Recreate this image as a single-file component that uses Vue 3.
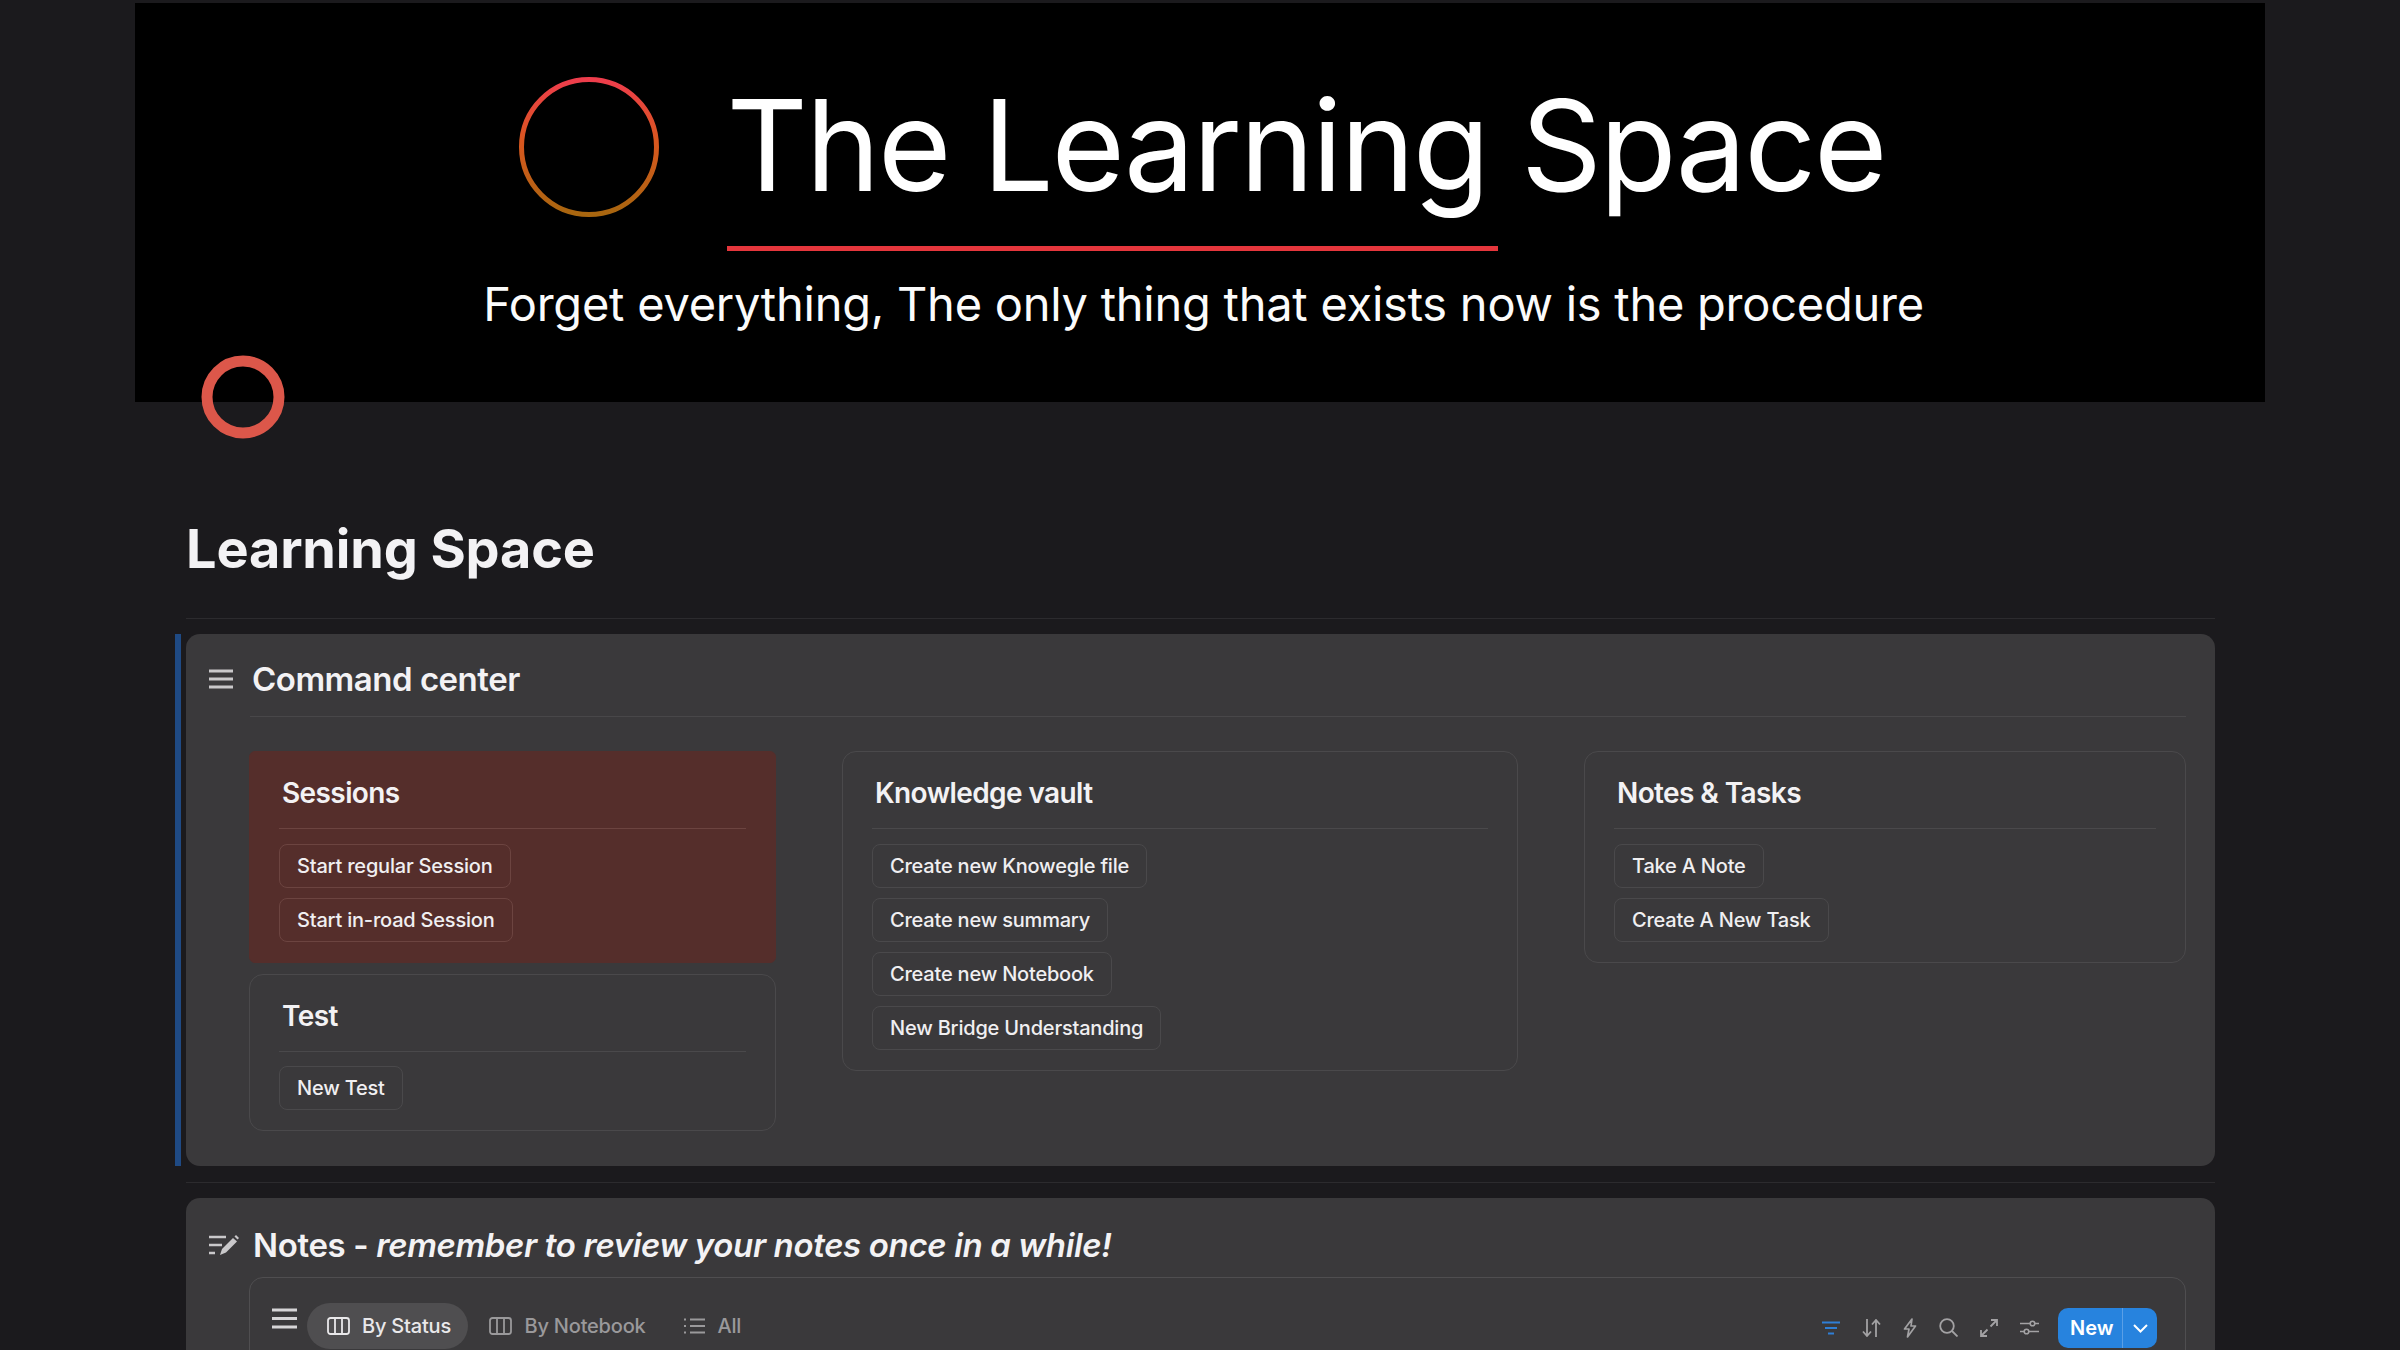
<script setup>
const columns = [
  [
    { title: 'Sessions', tone: 'red', actions: ['Start regular Session', 'Start in-road Session'] },
    { title: 'Test', actions: ['New Test'] }
  ],
  [
    {
      title: 'Knowledge vault',
      actions: ['Create new Knowegle file', 'Create new summary', 'Create new Notebook', 'New Bridge Understanding']
    }
  ],
  [
    { title: 'Notes & Tasks', actions: ['Take A Note', 'Create A New Task'] }
  ]
]

const tabs = [
  { label: 'By Status', icon: 'board', active: true },
  { label: 'By Notebook', icon: 'board' },
  { label: 'All', icon: 'list' }
]
</script>

<template>
  <div class="page">
    <header class="banner">
      <div class="brand">
        <svg class="brand-ring" width="144" height="144" viewBox="0 0 144 144">
          <defs>
            <linearGradient id="ringFade" x1="0" y1="0" x2="0" y2="1">
              <stop offset="0" stop-color="#ee3d4c" />
              <stop offset="0.45" stop-color="#d9561f" />
              <stop offset="1" stop-color="#a8660f" />
            </linearGradient>
          </defs>
          <circle cx="72" cy="72" r="67.5" fill="none" stroke="url(#ringFade)" stroke-width="5" />
        </svg>
        <div>
          <h1 class="brand-title">The Learning Space</h1>
          <div class="brand-line"></div>
        </div>
      </div>
      <p class="brand-sub">Forget everything, The only thing that exists now is the procedure</p>
    </header>

    <svg class="page-icon" width="84" height="84" viewBox="0 0 84 84">
      <circle cx="42" cy="42" r="36" fill="none" stroke="#dc574a" stroke-width="11" />
    </svg>

    <main class="content">
      <h2 class="page-title">Learning Space</h2>
      <div class="rule"></div>

      <div class="quote">
        <section class="callout">
          <div class="callout-head">
            <svg class="head-icon" width="26" height="20" viewBox="0 0 26 20">
              <path d="M1 2h24M1 10h24M1 18h24" stroke="#c9c8ca" stroke-width="3" fill="none" />
            </svg>
            <h3>Command center</h3>
          </div>
          <div class="head-rule"></div>

          <div class="grid">
            <div v-for="(col, i) in columns" :key="i" class="column">
              <div v-for="card in col" :key="card.title" class="card" :class="card.tone">
                <h4>{{ card.title }}</h4>
                <div class="card-rule"></div>
                <button v-for="a in card.actions" :key="a" class="action">{{ a }}</button>
              </div>
            </div>
          </div>
        </section>
      </div>

      <div class="rule second"></div>

      <section class="callout notes">
        <div class="notes-head">
          <svg class="head-icon" width="32" height="22" viewBox="0 0 32 22">
            <path d="M1 3h17M1 11h13M1 19h6" stroke="#c9c8ca" stroke-width="2.6" fill="none" />
            <path d="M12 21l2-6L25 4l4 3.500L18 18.500z" fill="#c9c8ca" />
            <path d="M26.500 2.500l1.500-1.500 3 3-1.500 1.500z" fill="#c9c8ca" />
          </svg>
          <h3>Notes - <em>remember to review your notes once in a while!</em></h3>
        </div>

        <div class="db">
          <div class="db-bar">
            <svg class="db-menu" width="25" height="21" viewBox="0 0 25 21">
              <path d="M0 2h25M0 10.500h25M0 19h25" stroke="#d6d5d7" stroke-width="3" fill="none" />
            </svg>
            <button v-for="t in tabs" :key="t.label" class="tab" :class="{ active: t.active }">
              <svg v-if="t.icon === 'board'" width="23" height="18" viewBox="0 0 23 18" fill="none" stroke="currentColor" stroke-width="1.800">
                <rect x="1" y="1" width="21" height="16" rx="2.500" />
                <path d="M8 1v16M15 1v16" />
              </svg>
              <svg v-else width="23" height="18" viewBox="0 0 23 18" fill="none" stroke="currentColor" stroke-width="1.800">
                <path d="M7 2.500h15M7 9h15M7 15.500h15" />
                <path d="M1 2.500h2M1 9h2M1 15.500h2" />
              </svg>
              <span>{{ t.label }}</span>
            </button>

            <div class="tools">
              <svg width="18" height="14" viewBox="0 0 18 14" fill="none" stroke="#2f7fd6" stroke-width="2.200">
                <path d="M0 1.500h18M3 7h12M6 12.500h6" />
              </svg>
              <svg width="19" height="18" viewBox="0 0 19 18" fill="none" stroke="#a3a2a4" stroke-width="1.800">
                <path d="M5 0v17M1 12.500l4 4.500 4-4.500M14 18V1M10 5.500L14 1l4 4.500" />
              </svg>
              <svg width="14" height="20" viewBox="0 0 14 20" fill="none" stroke="#a3a2a4" stroke-width="1.700" stroke-linejoin="round">
                <path d="M9 1L1.500 11H6l-1.500 8L12.500 8H8z" />
              </svg>
              <svg width="19" height="19" viewBox="0 0 19 19" fill="none" stroke="#a3a2a4" stroke-width="1.800">
                <circle cx="8" cy="8" r="6.800" />
                <path d="M13 13l5.500 5.500" />
              </svg>
              <svg width="18" height="18" viewBox="0 0 18 18" fill="none" stroke="#a3a2a4" stroke-width="1.800">
                <path d="M10.500 7.500L17 1M11 1h6v6M7.500 10.500L1 17M1 11v6h6" />
              </svg>
              <svg width="19" height="15" viewBox="0 0 19 15" fill="none" stroke="#a3a2a4" stroke-width="1.600">
                <path d="M0 3.500h10M15 3.500h4M0 11.500h4M9 11.500h10" />
                <circle cx="12.500" cy="3.500" r="2.300" />
                <circle cx="6.500" cy="11.500" r="2.300" />
              </svg>
            </div>

            <div class="new-btn">
              <span class="new-label">New</span>
              <span class="new-caret">
                <svg width="15" height="9" viewBox="0 0 15 9" fill="none" stroke="#fff" stroke-width="2">
                  <path d="M1 1l6.500 6.500L14 1" />
                </svg>
              </span>
            </div>
          </div>
        </div>
      </section>
    </main>
  </div>
</template>

<style>
html,
body {
  margin: 0;
  background: #1b1a1d;
}
</style>

<style scoped>
.page {
  position: relative;
  height: 1350px;
  overflow: hidden;
  background: #1b1a1d;
  color: #f3f2f4;
  font-family: Inter, "Liberation Sans", sans-serif;
}

.banner {
  height: 399px;
  margin: 3px 135px 0;
  background: #000;
  box-sizing: border-box;
  padding-top: 72px;
  display: flex;
  flex-direction: column;
  align-items: center;
}

.brand {
  display: flex;
  align-items: flex-start;
  gap: 66px;
}

.brand-ring {
  margin-left: 2px;
}

.brand-title {
  margin: 3px 0 0;
  font-size: 126px;
  font-weight: 400;
  line-height: 134px;
  letter-spacing: -2.2px;
  color: #fff;
  white-space: nowrap;
}

.brand-line {
  width: 771px;
  height: 5px;
  margin-top: 34px;
  background: #e5363c;
}

.brand-sub {
  margin: 25px 0 0 7px;
  font-size: 47px;
  line-height: 56px;
  letter-spacing: -0.25px;
  color: #fbfbfb;
  white-space: nowrap;
}

.page-icon {
  position: absolute;
  left: 201px;
  top: 355px;
}

.content {
  margin: 0 185px 0 186px;
  padding-top: 115px;
}

.page-title {
  margin: 0;
  font-size: 54px;
  font-weight: 700;
  line-height: 64px;
  letter-spacing: -0.15px;
}

.rule {
  height: 1px;
  margin-top: 37px;
  background: #2c2b2e;
}

.rule.second {
  margin-top: 16px;
}

.quote {
  position: relative;
  margin-top: 15px;
}

.quote::before {
  content: "";
  position: absolute;
  left: -11px;
  top: 0;
  bottom: 0;
  width: 6px;
  background: #1f4a84;
}

.callout {
  background: #3a393b;
  border-radius: 14px;
  padding: 25px 29px 0 22px;
}

.quote .callout {
  height: 532px;
  box-sizing: border-box;
}

.callout-head,
.notes-head {
  display: flex;
  align-items: center;
  gap: 18px;
}

.callout-head h3,
.notes-head h3 {
  margin: 0;
  font-size: 33px;
  font-weight: 600;
  line-height: 40px;
  letter-spacing: -0.5px;
  white-space: nowrap;
}

.notes-head h3 {
  letter-spacing: -0.36px;
}

.head-icon {
  flex: none;
}

.head-rule {
  height: 1px;
  margin: 17px 0 34px 42px;
  background: #484749;
}

.grid {
  display: grid;
  grid-template-columns: 527px 676px 602px;
  column-gap: 66px;
  margin-left: 41px;
  align-items: start;
}

.column {
  display: flex;
  flex-direction: column;
  gap: 11px;
}

.card {
  display: flex;
  flex-direction: column;
  align-items: flex-start;
  gap: 10.3px;
  box-sizing: border-box;
  padding: 24px 29px 20px;
  border: 1.5px solid #4a494b;
  border-radius: 14px;
}

.card.red {
  background: #552e2b;
  border-color: #552e2b;
  border-radius: 6px;
}

.card h4 {
  margin: 0;
  padding-left: 3px;
  font-size: 28px;
  font-weight: 600;
  line-height: 34px;
  letter-spacing: -0.6px;
}

.card-rule {
  align-self: stretch;
  height: 1px;
  margin: 8px 0 4px;
  background: #4a494b;
}

.card.red .card-rule {
  background: #6c4440;
}

.action {
  height: 44px;
  padding: 0 17px;
  border: 1px solid #4a494b;
  border-radius: 8px;
  background: transparent;
  color: #f0eff1;
  font-family: inherit;
  font-size: 20px;
  font-weight: 500;
  letter-spacing: -0.2px;
  white-space: nowrap;
}

.card.red .action {
  border-color: #6c4440;
}

.notes {
  margin-top: 15px;
  height: 400px;
  box-sizing: border-box;
  padding-top: 27px;
}

.notes-head {
  gap: 13px;
}

.db {
  margin: 12px 0 0 41px;
  height: 200px;
  border: 1.5px solid #4f4e50;
  border-radius: 14px;
  box-sizing: border-box;
  padding: 25px 28px 0 22px;
}

.db-bar {
  display: flex;
  align-items: center;
  height: 46px;
}

.db-menu {
  margin: -16px 10px 0 0;
  flex: none;
}

.tab {
  display: flex;
  align-items: center;
  gap: 12px;
  height: 46px;
  padding: 0 17px 0 20px;
  border: none;
  border-radius: 23px;
  background: transparent;
  color: #9a999b;
  font-family: inherit;
  font-size: 20px;
  font-weight: 500;
  letter-spacing: -0.2px;
}

.tab.active {
  background: #4f4e50;
  color: #e9e8ea;
  margin-right: 1.5px;
}

.tools {
  display: flex;
  align-items: center;
  gap: 22px;
  margin: 3px 0 0 auto;
}

.new-btn {
  display: flex;
  height: 40px;
  margin: 4px 0 0 19px;
  border-radius: 10px;
  background: #2783de;
  overflow: hidden;
  color: #fff;
  font-size: 20px;
  font-weight: 600;
}

.new-label {
  display: flex;
  align-items: center;
  width: 65px;
  padding-left: 12px;
  box-sizing: border-box;
  border-right: 1px solid #5a9fe6;
}

.new-caret {
  display: flex;
  align-items: center;
  justify-content: center;
  width: 34px;
}
</style>
